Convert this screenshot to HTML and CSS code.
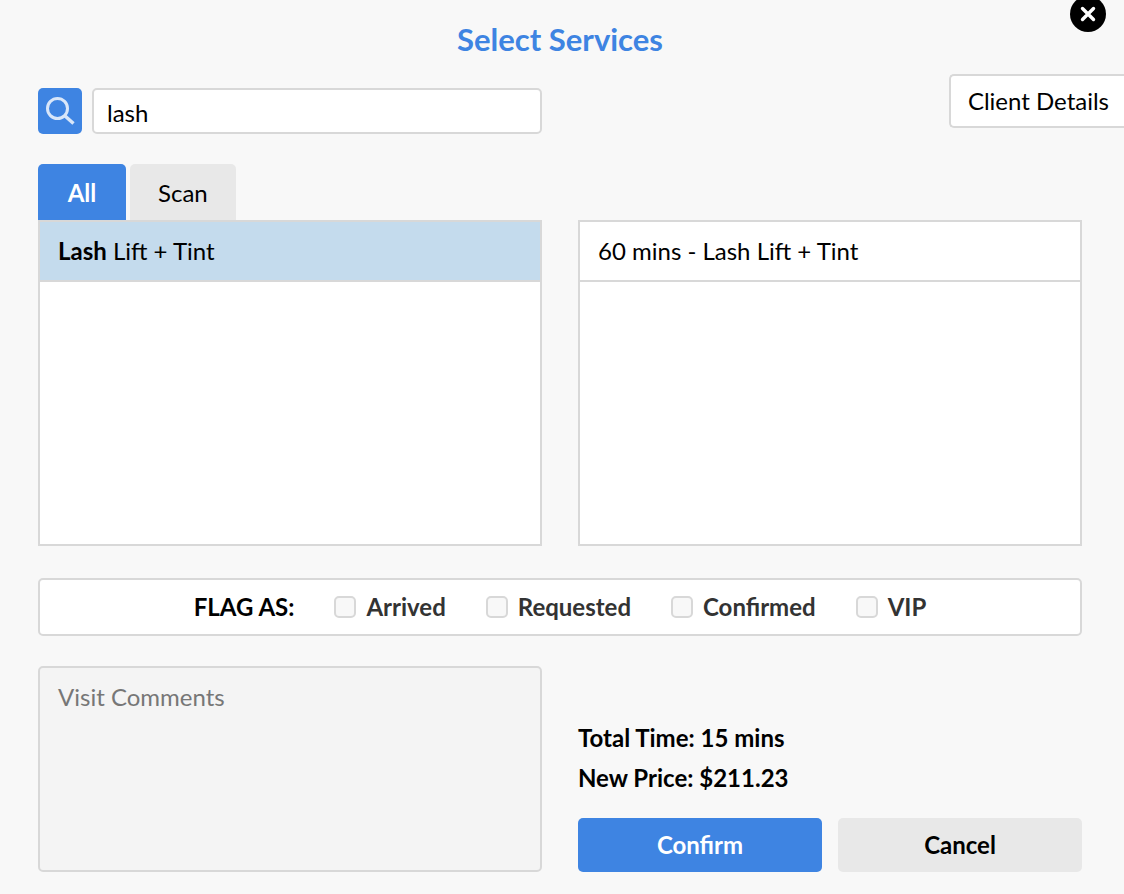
FILE: index.html
```
<!DOCTYPE html>
<html lang="en">
<head>
    <meta charset="UTF-8">
    <meta name="viewport" content="width=device-width, initial-scale=1.0">
    <title>Select Services</title>
    <link rel="stylesheet" href="styles.css">
</head>
<body>
    <div class="modal">
        <button type="button" class="close-btn" aria-label="Close">
            <svg viewBox="0 0 36 36" width="36" height="36">
                <path d="M12.5 12.5 L23.5 23.5 M23.5 12.5 L12.5 23.5" stroke="#fff" stroke-width="3.4" stroke-linecap="round"/>
            </svg>
        </button>

        <h1>Select Services</h1>

        <form class="services-form">
            <div class="toolbar">
                <div class="search">
                    <button type="button" class="search-btn" aria-label="Search">
                        <svg viewBox="0 0 30 30" width="30" height="30" fill="none" stroke="#d8e6f9">
                            <circle cx="12.5" cy="12.5" r="10" stroke-width="3"/>
                            <path d="M19.5 19.5 L28.5 27.5" stroke-width="3.4"/>
                        </svg>
                    </button>
                    <input type="text" class="search-input" aria-label="Search services" value="lash">
                </div>
                <button type="button" class="client-btn">Client Details</button>
            </div>

            <div class="columns lists">
                <div class="picker">
                    <div class="tabs">
                        <button type="button" class="tab active">All</button>
                        <button type="button" class="tab">Scan</button>
                    </div>
                    <ul class="list">
                        <li class="selected"><strong>Lash</strong> Lift + Tint</li>
                    </ul>
                </div>
                <ul class="list">
                    <li>60 mins - Lash Lift + Tint</li>
                </ul>
            </div>

            <div class="flags">
                <span class="flags-title">FLAG AS:</span>
                <label for="arrived"><input type="checkbox" id="arrived">Arrived</label>
                <label for="requested"><input type="checkbox" id="requested">Requested</label>
                <label for="confirmed"><input type="checkbox" id="confirmed">Confirmed</label>
                <label for="vip"><input type="checkbox" id="vip">VIP</label>
            </div>

            <div class="columns">
                <textarea class="comments" aria-label="Visit Comments" placeholder="Visit Comments"></textarea>
                <div class="summary">
                    <p>Total Time: 15 mins</p>
                    <p>New Price: $211.23</p>
                    <div class="actions">
                        <button type="submit" class="btn confirm">Confirm</button>
                        <button type="button" class="btn cancel">Cancel</button>
                    </div>
                </div>
            </div>
        </form>
    </div>
</body>
</html>
```
FILE: styles.css
```
* {
    margin: 0;
    padding: 0;
    box-sizing: border-box;
}

body {
    font-family: Lato, 'Helvetica Neue', Arial, sans-serif;
    font-size: 24px;
    line-height: 40px;
    color: #000;
    background: #f8f8f8;
}

button,
input,
textarea {
    font: inherit;
    color: inherit;
}

button {
    border: none;
    cursor: pointer;
}

.modal {
    position: relative;
    padding: 0 42px 22px 38px;
    overflow: hidden;
}

.close-btn {
    position: absolute;
    top: -4px;
    right: 18px;
    width: 36px;
    height: 36px;
    border-radius: 50%;
    background: #000;
}

.close-btn svg {
    display: block;
}

h1 {
    padding: 19px 0 15px;
    font-size: 31px;
    font-weight: 700;
    text-align: center;
    color: #3e84e2;
}

.services-form {
    display: flex;
    flex-direction: column;
}

.toolbar {
    display: flex;
    justify-content: space-between;
    height: 60px;
    margin-bottom: 30px;
}

.search {
    display: flex;
    align-self: flex-end;
    gap: 10px;
    width: calc(50% - 18px);
    height: 46px;
}

.search-btn {
    display: flex;
    flex: none;
    align-items: center;
    justify-content: center;
    width: 44px;
    border-radius: 5px;
    background: #3e84e2;
}

.search-input {
    flex: 1;
    min-width: 0;
    padding: 4px 13px 0;
    border: 2px solid #d8d8d8;
    border-radius: 5px;
    background: #fff;
}

/* runs off the right edge of the modal */
.client-btn {
    align-self: flex-start;
    height: 54px;
    margin-right: -42px;
    padding: 0 15px 0 17px;
    border: 2px solid #d8d8d8;
    border-right: none;
    border-radius: 5px 0 0 5px;
    background: #fff;
}

.columns {
    display: grid;
    grid-template-columns: 1fr 1fr;
    gap: 36px;
}

.lists {
    align-items: end;
    margin-bottom: 32px;
}

.tabs {
    display: flex;
    gap: 4px;
}

.tab {
    min-width: 88px;
    height: 56px;
    padding: 2px 28px 0;
    border-radius: 5px 5px 0 0;
    background: #e8e8e8;
}

.tab.active {
    font-weight: 700;
    color: #fff;
    background: #3e84e2;
}

.list {
    min-height: 326px;
    border: 2px solid #d8d8d8;
    background: #fff;
    list-style: none;
}

.list li {
    padding: 9px 18px;
    border-bottom: 2px solid #d8d8d8;
}

.list .selected {
    background: #c4dbed;
}

.flags {
    display: flex;
    align-items: center;
    justify-content: center;
    gap: 40px;
    min-height: 58px;
    margin-bottom: 30px;
    border: 2px solid #d8d8d8;
    border-radius: 5px;
    font-weight: 700;
    background: #fff;
}

.flags label {
    display: flex;
    align-items: center;
    gap: 10px;
    color: #333;
}

.flags input {
    appearance: none;
    width: 22px;
    height: 22px;
    border: 2px solid #d8d8d8;
    border-radius: 5px;
    background: #f8f8f8;
}

.flags input:checked {
    background: #3e84e2;
}

.comments {
    display: block;
    width: 100%;
    height: 206px;
    padding: 9px 18px;
    border: 2px solid #d8d8d8;
    border-radius: 5px;
    background: #f4f4f4;
    resize: none;
}

.comments::placeholder {
    color: #777;
}

.summary {
    display: flex;
    flex-direction: column;
    justify-content: flex-end;
    font-weight: 700;
}

.actions {
    display: grid;
    grid-template-columns: 1fr 1fr;
    gap: 16px;
    margin-top: 20px;
}

.btn {
    height: 54px;
    border-radius: 5px;
}

.confirm {
    color: #fff;
    background: #3e84e2;
}

.cancel {
    background: #e8e8e8;
}
```
